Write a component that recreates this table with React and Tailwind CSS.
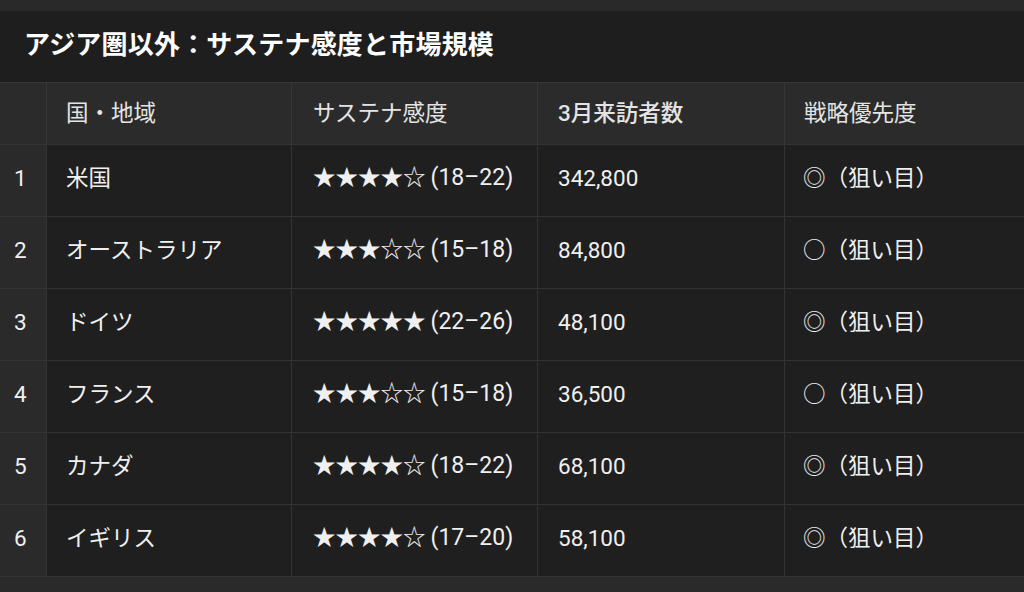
import React from 'react';

const rows = [
    { no: 1, name: '米国', stars: '★★★★☆', range: '(18–22)', visitors: '342,800', mark: '◎' },
    { no: 2, name: 'オーストラリア', stars: '★★★☆☆', range: '(15–18)', visitors: '84,800', mark: '○' },
    { no: 3, name: 'ドイツ', stars: '★★★★★', range: '(22–26)', visitors: '48,100', mark: '◎' },
    { no: 4, name: 'フランス', stars: '★★★☆☆', range: '(15–18)', visitors: '36,500', mark: '○' },
    { no: 5, name: 'カナダ', stars: '★★★★☆', range: '(18–22)', visitors: '68,100', mark: '◎' },
    { no: 6, name: 'イギリス', stars: '★★★★☆', range: '(17–20)', visitors: '58,100', mark: '◎' },
];

const font = { fontFamily: 'Roboto, "Noto Sans CJK JP", sans-serif' };

const App = () => {
    return (
        <div className="w-[1024px] h-[592px] overflow-hidden bg-[#2a2a2a] text-[#f0f0f0]" style={font}>
            <div className="h-[11px] bg-[#292929]" />
            <div className="h-[71px] bg-[#1e1e1e] flex items-center px-6">
                <h1 className="text-[26px] font-bold text-white tracking-[0.2px] -mt-[2px]">アジア圏以外：サステナ感度と市場規模</h1>
            </div>

            <div className="grid grid-cols-[47px_245px_246px_247px_1fr] text-[22.5px]">
                {/* Header */}
                <div className="h-[62px] bg-[#2b2b2b] border-t border-r border-[#363636]" />
                <div className="h-[62px] bg-[#2b2b2b] border-t border-r border-[#363636] flex items-center pl-[19px] text-[#e4e4e4]">国・地域</div>
                <div className="h-[62px] bg-[#2b2b2b] border-t border-r border-[#363636] flex items-center pl-[21px] text-[#e4e4e4]">サステナ感度</div>
                <div className="h-[62px] bg-[#2b2b2b] border-t border-r border-[#363636] flex items-center pl-5 font-medium text-[#e4e4e4]">3月来訪者数</div>
                <div className="h-[62px] bg-[#2b2b2b] border-t border-[#363636] flex items-center pl-[19px] text-[#e4e4e4]">戦略優先度</div>

                {rows.map((r) => (
                    <React.Fragment key={r.no}>
                        <div className="h-[72px] bg-[#2a2a2a] border-t border-r border-[#333] flex items-center pl-[14px] pb-1">{r.no}</div>
                        <div className="h-[72px] bg-[#1f1f1f] border-t border-r border-[#333] flex items-center pl-[19px] pb-1">{r.name}</div>
                        <div className="h-[72px] bg-[#1f1f1f] border-t border-r border-[#333] flex items-center pl-[21px] pb-1 whitespace-nowrap">
                            <span>
                                <span className="text-[22.5px]">{r.stars}</span>
                                <span className="ml-[5px] text-[23px]">{r.range}</span>
                            </span>
                        </div>
                        <div className="h-[72px] bg-[#1f1f1f] border-t border-r border-[#333] flex items-center pl-5 pb-1">{r.visitors}</div>
                        <div className="h-[72px] bg-[#1f1f1f] border-t border-[#333] flex items-center pl-[18px] pb-1 whitespace-nowrap">
                            <span>{r.mark}</span>
                            <span>（狙い目）</span>
                        </div>
                    </React.Fragment>
                ))}
                <div className="col-span-5 border-t border-[#333]" />
            </div>
        </div>
    );
};

export default App;
